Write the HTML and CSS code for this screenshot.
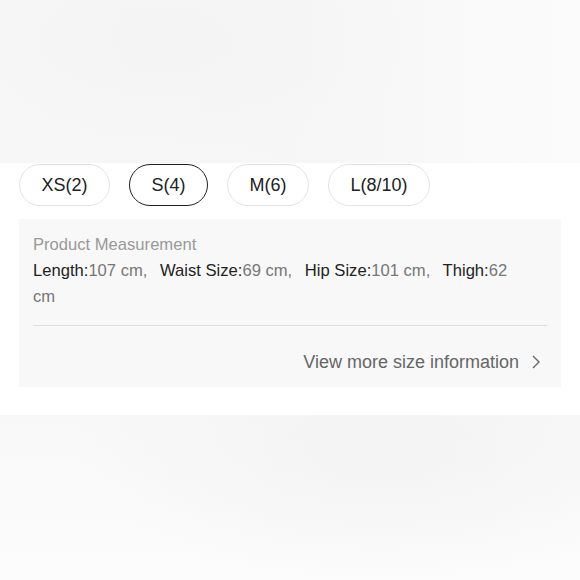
FILE: index.html
```html
<!DOCTYPE html>
<html>
<head>
<meta charset="utf-8">
<link rel="stylesheet" href="styles.css">
</head>
<body>
<div class="fade-top"></div>
<div class="sizes">
  <button class="chip">XS(2)</button>
  <button class="chip selected">S(4)</button>
  <button class="chip">M(6)</button>
  <button class="chip">L(8/10)</button>
</div>
<div class="panel">
  <div class="title">Product Measurement</div>
  <div class="measures"><span class="item"><span class="k">Length:</span><span class="v">107 cm,</span></span> <span class="item"><span class="k">Waist Size:</span><span class="v">69 cm,</span></span> <span class="item"><span class="k">Hip Size:</span><span class="v">101 cm,</span></span> <span class="item"><span class="k">Thigh:</span><span class="v">62 cm</span></span></div>
  <div class="divider"></div>
  <div class="more">
    <span>View more size information</span>
    <svg class="chev" width="10" height="16" viewBox="0 0 10 16"><path d="M2 2 L8 8 L2 14" fill="none" stroke="#666" stroke-width="1.4"/></svg>
  </div>
</div>
<div class="fade-bottom"></div>
</body>
</html>
```
FILE: styles.css
```css
html, body {
  margin: 0;
  padding: 0;
  background: #fff;
  font-family: "Liberation Sans", Arial, sans-serif;
  width: 580px;
  height: 580px;
  overflow: hidden;
}
.fade-top {
  height: 163px;
  background:
    radial-gradient(ellipse 260px 120px at 160px 40px, #f4f4f4 0%, rgba(246,246,246,0) 100%),
    linear-gradient(90deg, #f7f7f7 0%, #f6f6f6 50%, #fbfbfb 100%);
}
.sizes {
  display: flex;
  gap: 19px;
  padding: 1px 19px 0;
}
.chip {
  height: 42px;
  padding: 0 21.5px;
  border: 1px solid #e3e3e3;
  border-radius: 21px;
  background: #fff;
  font-family: "Liberation Sans", Arial, sans-serif;
  font-size: 18px;
  color: #222;
  box-sizing: border-box;
}
.chip.selected {
  border: 1.5px solid #222;
}
.panel {
  margin: 13px 19px 0;
  background: #f8f8f8;
  padding: 13px 14px 0;
  box-sizing: border-box;
  height: 168px;
}
.title {
  font-size: 16.6px;
  line-height: 26px;
  color: #999;
}
.measures {
  font-size: 16.6px;
  line-height: 26px;
  color: #222;
  padding-right: 24px;
}
.measures .item {
  margin-right: 8px;
}
.measures .v {
  color: #777;
}
.divider {
  margin-top: 15px;
  height: 1px;
  background: #dedede;
}
.more {
  display: flex;
  justify-content: flex-end;
  align-items: center;
  gap: 12px;
  height: 66px;
  padding: 3px 6px 0 0;
  box-sizing: border-box;
  height: 69px;
  font-size: 18px;
  color: #666;
}
.chev {
  display: block;
}
.fade-bottom {
  margin-top: 28px;
  height: 165px;
  background:
    radial-gradient(ellipse 300px 140px at 380px 30px, #f3f3f3 0%, rgba(248,248,248,0) 100%),
    linear-gradient(180deg, #f8f8f8 0%, #fcfcfc 100%);
}
```
